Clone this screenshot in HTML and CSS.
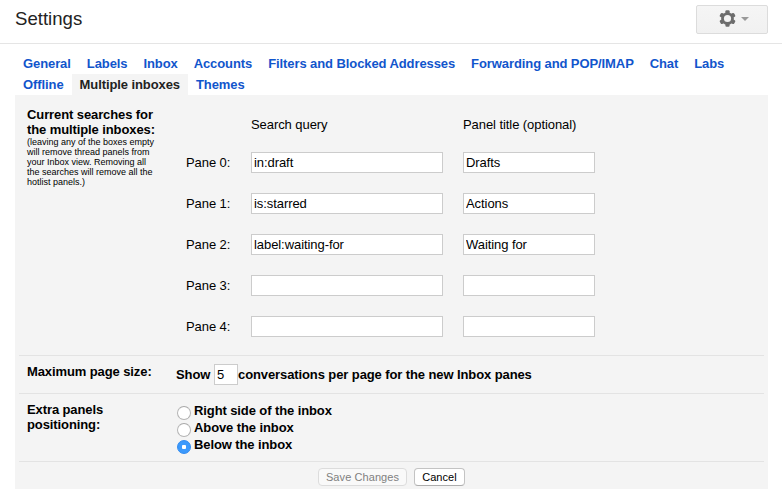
FILE: index.html
```
<!DOCTYPE html>
<html lang="en">
<head>
<meta charset="utf-8">
<title>Settings</title>
<link rel="stylesheet" href="styles.css">
</head>
<body>
<header class="header">
  <h1 class="title">Settings</h1>
  <button class="gear-button" type="button" aria-label="Settings menu">
    <svg class="gear" width="17" height="17" viewBox="0 0 18 18"><g fill="#6d6d6d"><rect x="6.8" y="0.2" width="4.4" height="17.6" rx="1.2"/><rect x="6.8" y="0.2" width="4.4" height="17.6" rx="1.2" transform="rotate(60 9 9)"/><rect x="6.8" y="0.2" width="4.4" height="17.6" rx="1.2" transform="rotate(120 9 9)"/><circle cx="9" cy="9" r="6.7"/></g><circle cx="9" cy="9" r="3.8" fill="#f3f3f3"/></svg>
    <span class="caret"></span>
  </button>
</header>
<nav class="tabs">
  <div class="tab-row">
    <a class="tab">General</a><a class="tab">Labels</a><a class="tab">Inbox</a><a class="tab">Accounts</a><a class="tab">Filters and Blocked Addresses</a><a class="tab">Forwarding and POP/IMAP</a><a class="tab">Chat</a><a class="tab">Labs</a>
  </div>
  <div class="tab-row">
    <a class="tab">Offline</a><a class="tab active">Multiple inboxes</a><a class="tab">Themes</a>
  </div>
</nav>
<main class="panel">
  <section class="row searches">
    <div class="label">Current searches for<br>the multiple inboxes:
      <p class="hint">(leaving any of the boxes empty<br>will remove thread panels from<br>your Inbox view. Removing all<br>the searches will remove all the<br>hotlist panels.)</p>
    </div>
    <div class="panes">
      <span></span><span>Search query</span><span>Panel title (optional)</span>
      <span>Pane 0:</span><input class="field" value="in:draft"><input class="field" value="Drafts">
      <span>Pane 1:</span><input class="field" value="is:starred"><input class="field" value="Actions">
      <span>Pane 2:</span><input class="field" value="label:waiting-for"><input class="field" value="Waiting for">
      <span>Pane 3:</span><input class="field"><input class="field">
      <span>Pane 4:</span><input class="field"><input class="field">
    </div>
  </section>
  <section class="row page-size">
    <div class="label">Maximum page size:</div>
    <div class="size"><span>Show</span><input class="field count" value="5"><span>conversations per page for the new Inbox panes</span></div>
  </section>
  <section class="row positioning">
    <div class="label">Extra panels<br>positioning:</div>
    <div class="options">
      <label class="option"><span class="radio"></span><span>Right side of the inbox</span></label>
      <label class="option"><span class="radio"></span><span>Above the inbox</span></label>
      <label class="option"><span class="radio checked"></span><span>Below the inbox</span></label>
    </div>
  </section>
  <footer class="actions">
    <button class="button" type="button" disabled>Save Changes</button>
    <button class="button" type="button">Cancel</button>
  </footer>
</main>
</body>
</html>
```
FILE: styles.css
```
* { box-sizing: border-box; }
body {
  margin: 0;
  background: #fff;
  color: #000;
  font: 13px/15px "Liberation Sans", Arial, sans-serif;
  letter-spacing: -0.1px;
  overflow: hidden;
}
.header {
  display: flex;
  justify-content: space-between;
  height: 44px;
  padding: 5px 14px 0 15px;
  border-bottom: 1px solid #e5e5e5;
}
.title { margin: 4px 0 0; font-size: 18.6px; line-height: 20px; font-weight: 400; letter-spacing: 0; color: #222; }
.gear-button {
  display: flex;
  align-items: center;
  gap: 5px;
  width: 72px;
  height: 29px;
  padding: 0 0 2px 22px;
  border: 1px solid #dcdcdc;
  border-radius: 2px;
  background: linear-gradient(#f5f5f5, #f1f1f1);
}
.caret { border: 4px solid transparent; border-top-color: #999; border-bottom: 0; margin-top: 1px; }
.tabs { padding: 9px 0 0 15px; height: 51px; }
.tab-row { display: flex; height: 21px; }
.tab { padding: 3px 8px 0; font-weight: 700; color: #15c; white-space: nowrap; letter-spacing: -0.09px; }
.tab.active { background: #f4f4f4; color: #222; }
.panel { width: 753px; height: 394px; margin-left: 15px; padding: 0 4px; background: #f4f4f4; }
.row { display: flex; border-bottom: 1px solid #e3e3e3; font-weight: 700; }
.label { flex: none; padding-left: 8px; white-space: nowrap; }
.searches { height: 261px; padding-top: 12px; }
.searches .label { width: 167px; }
.hint { margin: 0; font-size: 9px; line-height: 10px; font-weight: 400; letter-spacing: 0; }
.panes {
  display: grid;
  grid-template-columns: 65px 192px 132px;
  grid-template-rows: 35px repeat(5, 41px);
  column-gap: 0;
  align-items: center;
  font-weight: 400;
  letter-spacing: -0.07px;
}
.panes > :nth-child(3n) { margin-left: 20px; width: 132px; white-space: nowrap; }
.field {
  width: 192px;
  height: 21px;
  margin: 0;
  padding: 0 2px;
  border: 1px solid #ccc;
  background: #fff;
  color: #000;
  font: inherit;
  letter-spacing: inherit;
}
.page-size { height: 38px; padding-top: 8px; }
.page-size .label { width: 157px; }
.size { display: flex; line-height: 21px; }
.size > span:first-child { width: 34px; }
.count { width: 24px; margin-left: 4px; font-weight: 400; }
.positioning { height: 68px; padding-top: 8px; }
.positioning .label { width: 158px; }
.option { display: flex; gap: 3px; height: 17px; line-height: 17px; }
.radio {
  width: 14px;
  height: 14px;
  margin-top: 4px;
  border: 1px solid #b4b4b4;
  border-top-color: #a8a8a8;
  border-radius: 50%;
  background: #fff;
}
.radio.checked { border-color: #2f8af0; background: radial-gradient(circle, #fff 0 2px, #3b99fc 2.5px); }
.actions { display: flex; gap: 7px; padding: 6px 0 0 299px; }
.button {
  height: 18px;
  width: 51px;
  padding: 0;
  border: 1px solid #c3c3c3;
  border-bottom-color: #adadad;
  border-radius: 4px;
  background: #fff;
  color: #000;
  font: 11px/15px "Liberation Sans", Arial, sans-serif;
  letter-spacing: 0.08px;
}
.button:disabled { width: 89px; border-color: #dcdcdc; background: #f9f9f9; color: #808080; }
```
